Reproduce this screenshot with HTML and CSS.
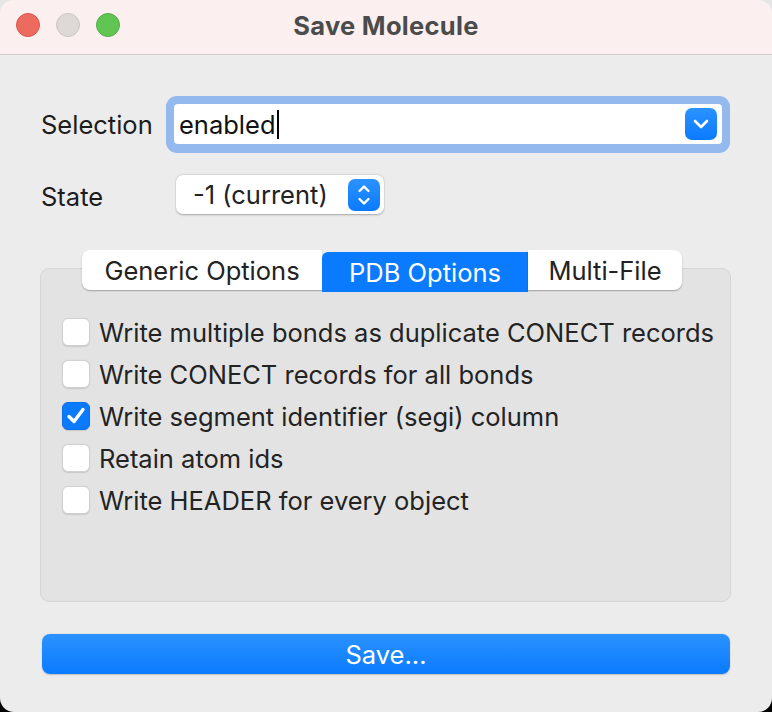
FILE: index.html
```html
<!DOCTYPE html>
<html>
<head>
<meta charset="utf-8">
<link rel="stylesheet" href="styles.css">
</head>
<body>
<div class="window">
  <div class="titlebar">
    <div class="lights">
      <span class="light red"></span>
      <span class="light gray"></span>
      <span class="light green"></span>
    </div>
    <div class="title">Save Molecule</div>
  </div>
  <div class="content">
    <div class="row row-sel">
      <div class="label">Selection</div>
      <div class="combo">
        <span class="combo-text">enabled</span><span class="caret"></span>
        <span class="combo-btn">
          <svg width="16" height="10" viewBox="0 0 16 10"><polyline points="2,2 8,8 14,2" fill="none" stroke="#fff" stroke-width="2.6" stroke-linecap="round" stroke-linejoin="round"/></svg>
        </span>
      </div>
    </div>
    <div class="row row-state">
      <div class="label label-state">State</div>
      <div class="popup">
        <span class="popup-text">-1 (current)</span>
        <span class="stepper">
          <svg width="14" height="24" viewBox="0 0 14 24"><polyline points="2.5,8 7,3.5 11.5,8" fill="none" stroke="#fff" stroke-width="2.4" stroke-linecap="round" stroke-linejoin="round"/><polyline points="2.5,16 7,20.5 11.5,16" fill="none" stroke="#fff" stroke-width="2.4" stroke-linecap="round" stroke-linejoin="round"/></svg>
        </span>
      </div>
    </div>
    <div class="tabgroup">
      <div class="tabs">
        <div class="tab tab-generic">Generic Options</div>
        <div class="tab tab-pdb active">PDB Options</div>
        <div class="tab tab-multi">Multi-File</div>
      </div>
      <div class="panel">
        <div class="check"><span class="box"></span><span>Write multiple bonds as duplicate CONECT records</span></div>
        <div class="check"><span class="box"></span><span>Write CONECT records for all bonds</span></div>
        <div class="check"><span class="box checked"><svg width="20" height="18" viewBox="0 0 20 18"><polyline points="3,9.5 8,14.5 17,2.5" fill="none" stroke="#fff" stroke-width="3.4" stroke-linecap="round" stroke-linejoin="round"/></svg></span><span>Write segment identifier (segi) column</span></div>
        <div class="check"><span class="box"></span><span>Retain atom ids</span></div>
        <div class="check"><span class="box"></span><span>Write HEADER for every object</span></div>
      </div>
    </div>
    <div class="save">Save...</div>
  </div>
</div>
</body>
</html>
```
FILE: styles.css
```css
html, body {
  margin: 0;
  padding: 0;
}
body {
  width: 772px;
  height: 712px;
  background: linear-gradient(#e6e6e6 0, #e6e6e6 50%, #000 50%, #000 100%);
  font-family: Inter, "Noto Sans", sans-serif;
  color: #222;
  overflow: hidden;
}
.window {
  width: 772px;
  height: 712px;
  border-radius: 14px;
  overflow: hidden;
  background: #ececec;
  display: flex;
  flex-direction: column;
}
.titlebar {
  height: 54px;
  flex: none;
  background: #fbf0ef;
  border-bottom: 1px solid #cfc9c8;
  position: relative;
  display: flex;
  align-items: center;
  justify-content: center;
}
.lights {
  position: absolute;
  left: 16px;
  top: 13px;
  display: flex;
  gap: 16px;
}
.light {
  width: 24px;
  height: 24px;
  border-radius: 50%;
  box-sizing: border-box;
}
.red { background: #ec6a5e; border: 1px solid #d7574c; }
.gray { background: #ded8d7; border: 1px solid #cbc4c3; }
.green { background: #61c554; border: 1px solid #52ad47; }
.title {
  font-weight: 700;
  font-size: 25.5px;
  color: #4b4b4b;
  letter-spacing: 0.3px;
  margin-top: -4px;
}
.content {
  padding: 0 41px 0 40px;
}
.row {
  display: flex;
  align-items: center;
}
.label {
  font-size: 25.5px;
  width: 125px;
  padding-left: 1px;
  color: #1c1c1c;
}
.label-state {
  padding-top: 4px;
}
.row-sel {
  margin-top: 49px;
}
.combo {
  margin-left: 8px;
  width: 548px;
  height: 40px;
  box-sizing: border-box;
  background: #fff;
  border-radius: 4px;
  box-shadow: 0 0 0 8px #93b9ee, 0 1px 0 8px #93b9ee;
  display: flex;
  align-items: center;
  padding-left: 5px;
  position: relative;
}
.combo-text {
  font-size: 25.5px;
  color: #111;
}
.caret {
  width: 2px;
  height: 29px;
  background: #000;
  margin-left: 1px;
}
.combo-btn {
  margin-left: auto;
  margin-right: 5px;
  width: 32px;
  height: 32px;
  border-radius: 7px;
  background: linear-gradient(#2b93ff, #0a7aff);
  display: flex;
  align-items: center;
  justify-content: center;
}
.row-state {
  margin-top: 31px;
}
.popup {
  margin-left: 10px;
  width: 208px;
  height: 39px;
  box-sizing: border-box;
  background: #fff;
  border-radius: 7px;
  box-shadow: 0 0.5px 2px rgba(0,0,0,0.3);
  display: flex;
  align-items: center;
  padding-left: 17px;
}
.popup-text {
  font-size: 25.5px;
  color: #222;
}
.stepper {
  margin-left: auto;
  margin-right: 4px;
  width: 32px;
  height: 32px;
  border-radius: 7px;
  background: linear-gradient(#2b93ff, #0a7aff);
  display: flex;
  align-items: center;
  justify-content: center;
}
.tabgroup {
  margin-top: 36px;
}
.tabs {
  display: flex;
  margin-left: 42px;
  position: relative;
  z-index: 1;
  height: 40px;
}
.tab {
  height: 40px;
  box-sizing: border-box;
  display: flex;
  align-items: center;
  justify-content: center;
  font-size: 25.5px;
  color: #222;
  background: #fff;
  box-shadow: 0 1px 1.5px rgba(0,0,0,0.3);
}
.tab-generic {
  width: 240px;
  border-radius: 8px 0 0 8px;
}
.tab-pdb {
  width: 206px;
}
.tab-multi {
  width: 154px;
  border-radius: 0 8px 8px 0;
}
.tab.active {
  background: #0a7bff;
  color: #fff;
  border-radius: 6px 0 0 0;
  margin-top: 2px;
  box-shadow: none;
}
.panel {
  margin-top: -22px;
  height: 334px;
  box-sizing: border-box;
  background: #e3e3e3;
  border: 1px solid #d6d6d6;
  border-radius: 9px;
  padding: 42px 0 0 21px;
}
.check {
  display: flex;
  align-items: center;
  height: 42px;
  gap: 9px;
  font-size: 25.5px;
  color: #232323;
}
.box {
  width: 28px;
  height: 28px;
  box-sizing: border-box;
  background: #fff;
  border-radius: 6px;
  border: 1px solid #d0d0d0;
  box-shadow: 0 0.5px 1px rgba(0,0,0,0.12);
  display: flex;
  align-items: center;
  justify-content: center;
  flex: none;
}
.box.checked {
  background: #0a7aff;
  border-color: #0a70e8;
}
.save {
  margin-top: 32px;
  margin-left: 2px;
  width: 688px;
  height: 40px;
  border-radius: 8px;
  background: linear-gradient(#2b92ff, #0a7bff);
  box-shadow: 0 0.5px 1.5px rgba(0,0,0,0.2);
  color: #fff;
  font-size: 25.5px;
  display: flex;
  align-items: center;
  justify-content: center;
}
```
